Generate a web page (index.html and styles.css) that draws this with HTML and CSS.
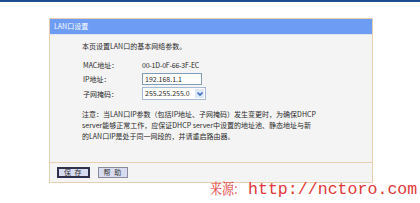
FILE: index.html
```html
<!DOCTYPE html>
<html>
<head>
<meta charset="utf-8">
<link rel="stylesheet" href="styles.css">
</head>
<body>
<div class="topbar"></div>
<div class="panel">
  <div class="panel-head">LAN口设置</div>
  <div class="panel-body">
    <div class="intro">本页设置LAN口的基本网络参数。</div>
    <div class="form">
      <div class="label">MAC地址：</div><div class="value mac">00-1D-0F-66-3F-EC</div>
      <div class="label">IP地址：</div><div class="value"><span class="input">192.168.1.1</span></div>
      <div class="label">子网掩码：</div><div class="value"><span class="select">255.255.255.0<span class="arrow"><svg width="8" height="8" viewBox="0 0 8 8"><path d="M1.5 2.5 L4 5 L6.5 2.5" fill="none" stroke="#3a6ec8" stroke-width="1.6"/></svg></span></span></div>
    </div>
    <div class="note">注意：当LAN口IP参数（包括IP地址、子网掩码）发生变更时，为确保DHCP<br>server能够正常工作，应保证DHCP server中设置的地址池、静态地址与新<br>的LAN口IP是处于同一网段的，并请重启路由器。</div>
  </div>
  <div class="buttons">
    <span class="btn focus">保 存</span>
    <span class="btn">帮 助</span>
  </div>
</div>
<div class="watermark"><span class="wm-cjk">来源:</span><span class="wm-url">http://nctoro.com</span></div>
</body>
</html>
```
FILE: styles.css
```css
html, body {
  margin: 0;
  padding: 0;
  background: #ffffff;
}
body {
  font-family: "Noto Sans CJK SC", "Liberation Sans", sans-serif;
  font-size: 7px;
  color: #2a2a2a;
  width: 420px;
  height: 203px;
  overflow: hidden;
}
.topbar {
  height: 2px;
  background: #1d4f8f;
}
.panel {
  margin: 16px 0 0 49px;
  width: 322px;
  border: 1px solid #e7cfb0;
  background: #f4f4f4;
}
.panel-head {
  height: 15px;
  line-height: 15px;
  background: #6c9cf3;
  color: #ffffff;
  padding-left: 4px;
  border-bottom: 1px solid #dfe6f3;
}
.panel-body {
  padding: 5px 0 0 32px;
  height: 128px;
  border-bottom: 1px solid #e7cfb0;
  box-sizing: border-box;
}
.intro {
  line-height: 12px;
  margin-bottom: 7px;
}
.form {
  display: grid;
  grid-template-columns: 60px auto;
  row-gap: 2px;
  align-items: center;
  line-height: 12px;
}
.label {
  padding-left: 1px;
}
.value.mac {
  letter-spacing: -0.2px;
}
.input {
  display: inline-block;
  width: 56px;
  height: 10px;
  line-height: 10px;
  border: 1px solid #7f9db9;
  background: #fff;
  padding-left: 2px;
}
.select {
  display: inline-flex;
  align-items: center;
  width: 60px;
  height: 11px;
  line-height: 11px;
  border: 1px solid #a5b8d6;
  background: #fff;
  padding-left: 2px;
  justify-content: space-between;
}
.arrow {
  display: inline-flex;
  align-items: center;
  justify-content: center;
  width: 9px;
  height: 9px;
  margin-right: 1px;
  background: #dfe8f8;
}
.note {
  margin-top: 9px;
  line-height: 11px;
  white-space: nowrap;
}
.buttons {
  display: flex;
  gap: 8px;
  padding: 4px 0 4px 7px;
}
.btn {
  display: inline-block;
  height: 9px;
  line-height: 9px;
  padding: 0 5px;
  border: 1px solid #8a8a9a;
  background: #d8dcf0;
  color: #333;
  letter-spacing: 1px;
}
.btn.focus {
  border: 2px solid #30304a;
  height: 7px;
  line-height: 7px;
}
.watermark {
  position: absolute;
  left: 210px;
  top: 177px;
  color: #e03838;
  line-height: 22px;
  white-space: nowrap;
  display: flex;
  align-items: baseline;
}
.wm-cjk {
  display: inline-block;
  font-family: "Noto Serif CJK SC", "Noto Sans CJK SC", serif;
  font-size: 15px;
  width: 38px;
  transform: scaleX(0.8);
  transform-origin: left center;
}
.wm-url {
  font-family: "Liberation Mono", monospace;
  font-size: 16.6px;
}
```
